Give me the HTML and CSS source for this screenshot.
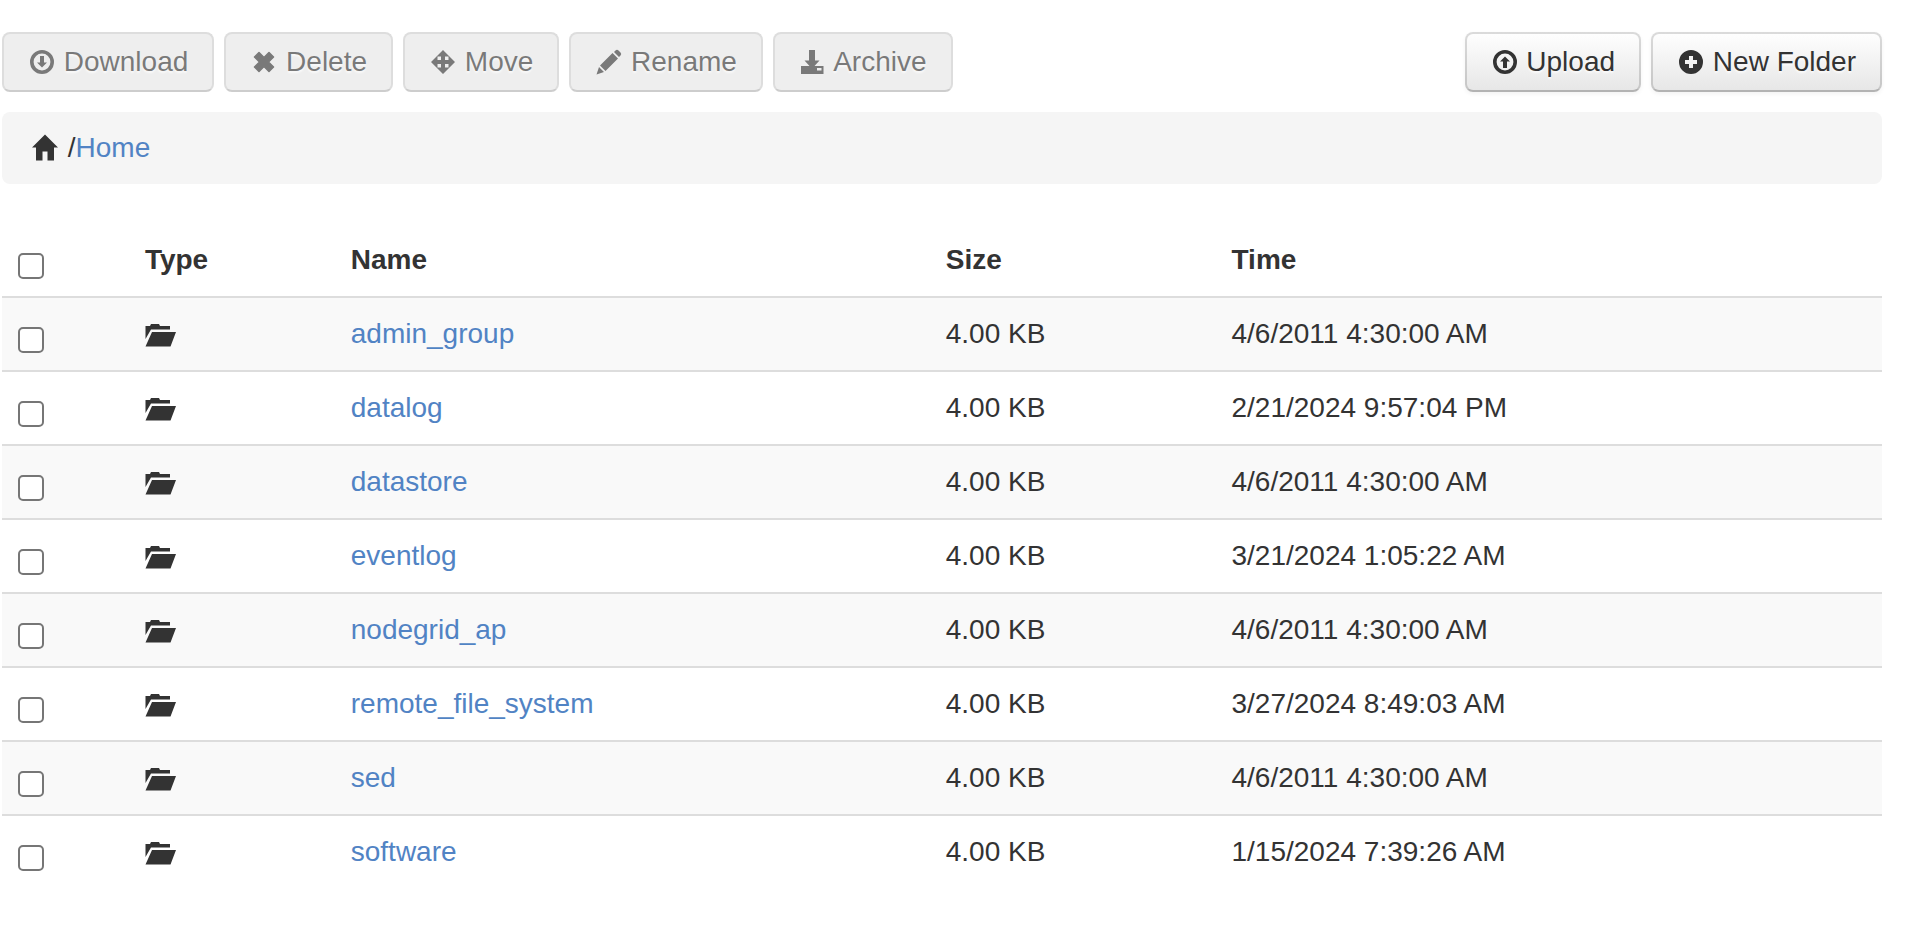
FILE: index.html
```html
<!DOCTYPE html>
<html lang="en">
<head>
<meta charset="utf-8">
<title>File Manager</title>
<link rel="stylesheet" href="styles.css">
</head>
<body>
<svg class="sprite" aria-hidden="true">
  <symbol id="i-download" viewBox="0 0 28 28"><circle cx="14" cy="14" r="10.2" fill="none" stroke="currentColor" stroke-width="3.6"/><path d="M12 8h4v6.500h3L14 19.500l-5-5h3z"/></symbol>
  <symbol id="i-upload" viewBox="0 0 28 28"><circle cx="14" cy="14" r="10.2" fill="none" stroke="currentColor" stroke-width="3.6"/><path d="M12 20h4v-6.500h3L14 8.500l-5 5h3z"/></symbol>
  <symbol id="i-plus" viewBox="0 0 28 28"><path fill-rule="evenodd" d="M14 2a12 12 0 1 0 0 24a12 12 0 1 0 0-24zM12 8h4v4h4v4h-4v4h-4v-4H8v-4h4z"/></symbol>
  <symbol id="i-remove" viewBox="0 0 28 28"><path d="M9 4.500l5 5 5-5 4.500 4.500-5 5 5 5-4.500 4.500-5-5-5 5L4.500 19l5-5-5-5z" stroke="currentColor" stroke-width="1.5" stroke-linejoin="round"/></symbol>
  <symbol id="i-move" viewBox="0 0 28 28"><path fill-rule="evenodd" d="M14 2l12 12-12 12L2 14zM8.500 8.500V12H12V8.500zM16 8.500V12h3.500V8.500zM8.500 16v3.500H12V16zM16 16v3.500h3.500V16z"/></symbol>
  <symbol id="i-pencil" viewBox="0 0 28 28"><path d="M20.500 2.500q1.500-1.500 3 0l2 2q1.500 1.500 0 3L24 9l-5-5zM17.500 5l5.500 5.500L10.500 23 5 17.500zM4 19l5 5-7.500 2.500z"/></symbol>
  <symbol id="i-archive" viewBox="0 0 28 28"><path fill-rule="evenodd" d="M10 2h6v10.500h4.500L15.500 18H24.500v8H2v-8h8.500L5.500 12.500H10zM18 20v2.500h4.500V20z"/></symbol>
  <symbol id="i-home" viewBox="0 0 28 28"><path d="M13 0.500L26 13.500H22V26.500H15.500V17.500H10.500V26.500H4V13.500H0z"/></symbol>
  <symbol id="i-folder" viewBox="0 0 32 28"><path d="M.5 4H5l1-2h8l1 2h10v3.500H6L.5 17zM7 10h24l-5.500 14.500H.5z"/></symbol>
</svg>

<main class="manager">
  <div class="toolbar">
    <div class="group">
      <button class="btn" type="button" disabled><svg class="icon"><use href="#i-download"/></svg> Download</button>
      <button class="btn" type="button" disabled><svg class="icon"><use href="#i-remove"/></svg> Delete</button>
      <button class="btn" type="button" disabled><svg class="icon"><use href="#i-move"/></svg> Move</button>
      <button class="btn" type="button" disabled><svg class="icon"><use href="#i-pencil"/></svg> Rename</button>
      <button class="btn" type="button" disabled><svg class="icon"><use href="#i-archive"/></svg> Archive</button>
    </div>
    <div class="group">
      <button class="btn" type="button"><svg class="icon"><use href="#i-upload"/></svg> Upload</button>
      <button class="btn" type="button"><svg class="icon"><use href="#i-plus"/></svg> New Folder</button>
    </div>
  </div>

  <nav class="breadcrumb" aria-label="Path"><svg class="icon"><use href="#i-home"/></svg> /<a href="#">Home</a></nav>

  <table class="files">
    <colgroup><col class="c-check"><col class="c-type"><col class="c-name"><col class="c-size"><col class="c-time"></colgroup>
    <thead>
      <tr><th><input class="check" type="checkbox" aria-label="Select all"></th><th>Type</th><th>Name</th><th>Size</th><th>Time</th></tr>
    </thead>
    <tbody>
      <tr><td><input class="check" type="checkbox" aria-label="Select admin_group"></td><td><svg class="folder"><use href="#i-folder"/></svg></td><td><a href="#">admin_group</a></td><td>4.00 KB</td><td>4/6/2011 4:30:00 AM</td></tr>
      <tr><td><input class="check" type="checkbox" aria-label="Select datalog"></td><td><svg class="folder"><use href="#i-folder"/></svg></td><td><a href="#">datalog</a></td><td>4.00 KB</td><td>2/21/2024 9:57:04 PM</td></tr>
      <tr><td><input class="check" type="checkbox" aria-label="Select datastore"></td><td><svg class="folder"><use href="#i-folder"/></svg></td><td><a href="#">datastore</a></td><td>4.00 KB</td><td>4/6/2011 4:30:00 AM</td></tr>
      <tr><td><input class="check" type="checkbox" aria-label="Select eventlog"></td><td><svg class="folder"><use href="#i-folder"/></svg></td><td><a href="#">eventlog</a></td><td>4.00 KB</td><td>3/21/2024 1:05:22 AM</td></tr>
      <tr><td><input class="check" type="checkbox" aria-label="Select nodegrid_ap"></td><td><svg class="folder"><use href="#i-folder"/></svg></td><td><a href="#">nodegrid_ap</a></td><td>4.00 KB</td><td>4/6/2011 4:30:00 AM</td></tr>
      <tr><td><input class="check" type="checkbox" aria-label="Select remote_file_system"></td><td><svg class="folder"><use href="#i-folder"/></svg></td><td><a href="#">remote_file_system</a></td><td>4.00 KB</td><td>3/27/2024 8:49:03 AM</td></tr>
      <tr><td><input class="check" type="checkbox" aria-label="Select sed"></td><td><svg class="folder"><use href="#i-folder"/></svg></td><td><a href="#">sed</a></td><td>4.00 KB</td><td>4/6/2011 4:30:00 AM</td></tr>
      <tr><td><input class="check" type="checkbox" aria-label="Select software"></td><td><svg class="folder"><use href="#i-folder"/></svg></td><td><a href="#">software</a></td><td>4.00 KB</td><td>1/15/2024 7:39:26 AM</td></tr>
    </tbody>
  </table>
</main>
</body>
</html>
```
FILE: styles.css
```css
* {
  box-sizing: border-box;
}

body {
  margin: 0;
  background: #fff;
  color: #333;
  font: 28px/40px "Liberation Sans", Arial, Helvetica, sans-serif;
}

a {
  color: #5183c4;
  text-decoration: none;
}

.sprite {
  display: none;
}

.manager {
  padding: 32px 24px 32px 2px;
}

.toolbar {
  display: flex;
  justify-content: space-between;
  margin-bottom: 20px;
}

.group {
  display: flex;
  gap: 10px;
}

.btn {
  padding: 8px 24px;
  border: 2px solid;
  border-color: rgba(0, 0, 0, 0.14) rgba(0, 0, 0, 0.14) #b3b3b3;
  border-radius: 8px;
  background: linear-gradient(#fff, #e6e6e6) border-box;
  box-shadow: 0 2px 4px rgba(0, 0, 0, 0.05);
  color: #333;
  font: inherit;
  text-shadow: 0 2px 2px rgba(255, 255, 255, 0.75);
  white-space: nowrap;
}

.btn:disabled {
  border-color: #ccc #ccc #b3b3b3;
  background: #e6e6e6;
  box-shadow: none;
  opacity: 0.65;
}

.icon {
  width: 28px;
  height: 28px;
  fill: currentColor;
  vertical-align: -5px;
}

.breadcrumb {
  margin-bottom: 40px;
  padding: 16px 30px;
  border-radius: 8px;
  background: #f5f5f5;
}

.files {
  width: 100%;
  border-collapse: separate;
  border-spacing: 0;
  table-layout: fixed;
}

.c-check { width: 6.75%; }
.c-type { width: 10.95%; }
.c-name { width: 31.65%; }
.c-size { width: 15.2%; }

.files th,
.files td {
  padding: 16px;
  text-align: left;
  vertical-align: top;
}

.files td {
  border-top: 2px solid #ddd;
}

.files tbody tr:nth-child(odd) {
  background: #f9f9f9;
}

.check {
  appearance: none;
  display: block;
  width: 26px;
  height: 26px;
  margin: 13px 0 0;
  border: 2px solid #767676;
  border-radius: 5px;
  background: #fff;
}

.check:checked {
  background: #5183c4;
}

.folder {
  display: block;
  width: 32px;
  height: 28px;
  margin-top: 8px;
  fill: #333;
}
```
